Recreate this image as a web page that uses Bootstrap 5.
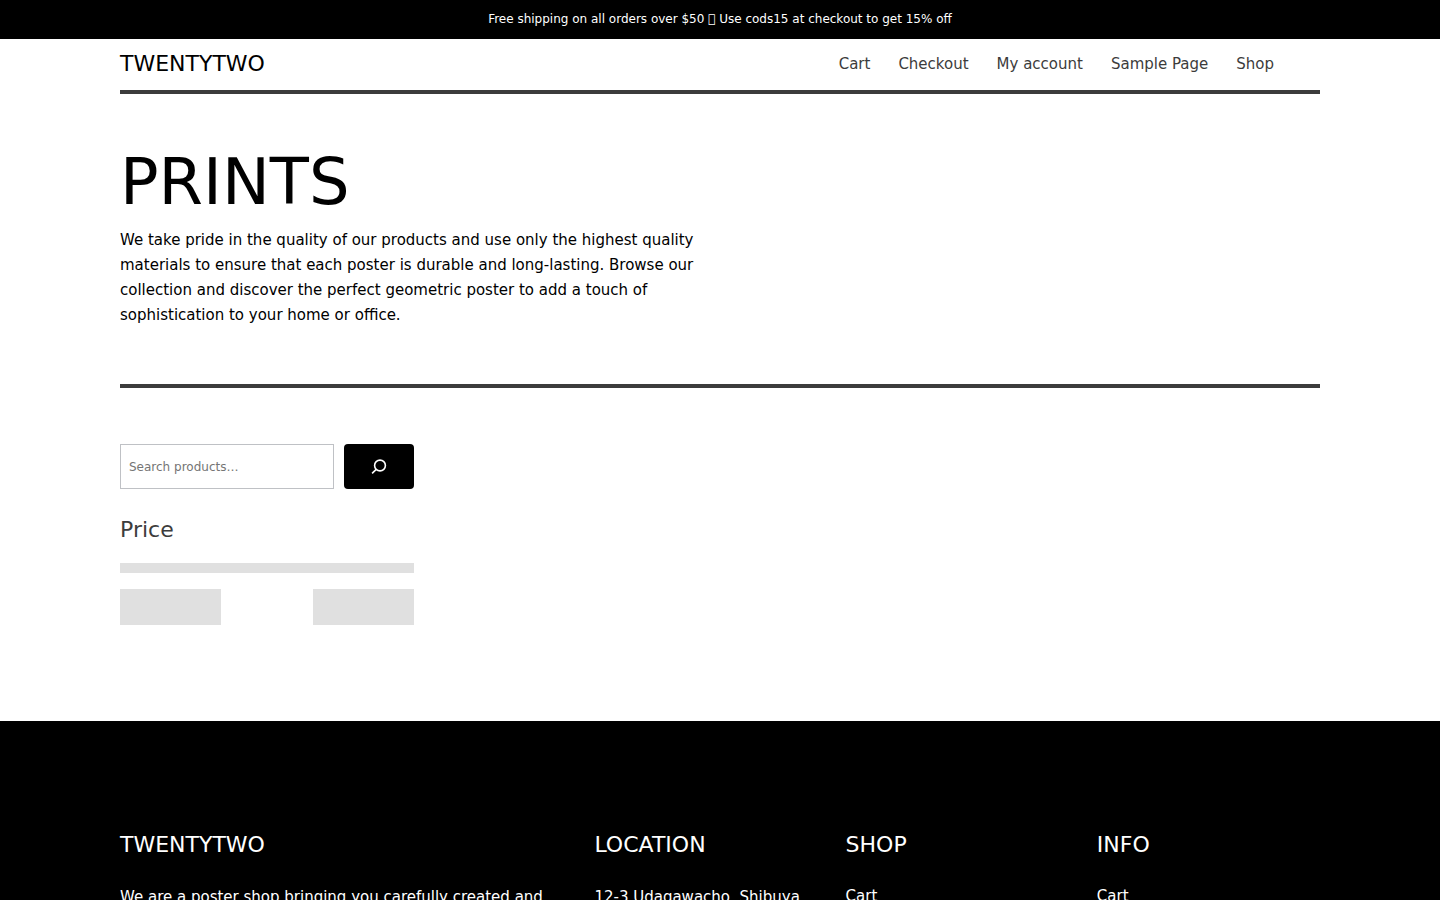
<!DOCTYPE html>
<html lang="en">
<head>
<meta charset="utf-8">
<meta name="viewport" content="width=device-width, initial-scale=1">
<title>Prints – TWENTYTWO</title>
<link href="https://cdn.jsdelivr.net/npm/bootstrap@5.3.0/dist/css/bootstrap.min.css" rel="stylesheet">
<style>
  body { font-family: "DejaVu Sans", sans-serif; font-size: 15px; line-height: 25px; color: #000; background: #fff; }
  a { color: inherit; text-decoration: none; }
  a:hover { text-decoration: underline; }
  .site-width { max-width: 1224px; padding-inline: 12px; }
  .promo { font-size: 12px; line-height: 21px; padding: 9px 12px; }
  .site-title, .foot-title, .filter-title { font-size: 22px; line-height: 28px; font-weight: 400; margin: 0; }
  .site-header { border-bottom: 4px solid #3c3c3c; color: #3c3c3c; padding: 11px 0 12px; }
  .site-nav { gap: 4px 28px; padding-right: 46px; }
  .intro { border-bottom: 4px solid #3c3c3c; padding: 50px 0 56px; }
  .intro h1 { font-size: 64px; line-height: 77px; font-weight: 400; margin: 0 0 7px; }
  .intro p { max-width: 600px; margin: 0; }
  .shop-body { padding: 56px 0 96px; }
  .shop-grid { display: grid; grid-template-columns: 1fr 3fr; gap: 24px; }
  .search-row { gap: 10px; height: 45px; }
  .search-row .form-control { font-size: 12px; padding: 0 8px; border: 1px solid #bfc1c5; border-radius: 0; }
  .search-row .form-control::placeholder { color: #757575; }
  .search-row .btn { width: 70px; background: #000; color: #fff; border-radius: 4px; padding: 0; }
  .filter-title { color: #3c3c3c; margin: 27px 0 19px; }
  .ghost { background: #e0e0e0; }
  .ghost-bar { height: 10px; margin-bottom: 16px; }
  .ghost-box { width: 101px; height: 36px; }
  .site-footer { padding: 110px 0 64px; }
  .foot-grid { display: grid; grid-template-columns: 2fr 1fr 1fr 1fr; gap: 28px; }
  .foot-title { margin-bottom: 26px; }
  .foot-links .foot-title { margin-bottom: 25px; }
  @media (max-width: 767px) {
    .shop-grid, .foot-grid { grid-template-columns: 1fr; }
    .site-nav { padding-right: 0; }
  }
</style>
</head>
<body>
<div class="promo bg-black text-white text-center">Free shipping on all orders over $50 &#xE0F0; Use cods15 at checkout to get 15% off</div>

<div class="container-fluid site-width">
  <header class="site-header d-flex flex-wrap justify-content-between align-items-center">
    <a class="site-title text-black" href="#">TWENTYTWO</a>
    <nav class="site-nav d-flex flex-wrap" aria-label="Main">
      <a href="#">Cart</a>
      <a href="#">Checkout</a>
      <a href="#">My account</a>
      <a href="#">Sample Page</a>
      <a href="#">Shop</a>
    </nav>
  </header>

  <main>
    <section class="intro">
      <h1>PRINTS</h1>
      <p>We take pride in the quality of our products and use only the highest quality materials to ensure that each poster is durable and long-lasting. Browse our collection and discover the perfect geometric poster to add a touch of sophistication to your home or office.</p>
    </section>

    <section class="shop-body">
      <div class="shop-grid">
        <aside>
          <form class="search-row d-flex" role="search">
            <label class="visually-hidden" for="product-search">Search</label>
            <input class="form-control" id="product-search" type="search" placeholder="Search products…">
            <button class="btn flex-shrink-0 d-flex align-items-center justify-content-center" type="submit" aria-label="Search">
              <svg width="24" height="24" viewBox="0 0 24 24" fill="none" stroke="currentColor" stroke-width="1.6" aria-hidden="true"><circle cx="13" cy="10.500" r="5.400"/><path d="M9.200 14.400 5.100 18.300"/></svg>
            </button>
          </form>
          <h3 class="filter-title">Price</h3>
          <div class="ghost ghost-bar"></div>
          <div class="d-flex justify-content-between">
            <div class="ghost ghost-box"></div>
            <div class="ghost ghost-box"></div>
          </div>
        </aside>
      </div>
    </section>
  </main>
</div>

<footer class="site-footer bg-black text-white">
  <div class="container-fluid site-width">
    <div class="foot-grid">
      <div>
        <h2 class="foot-title">TWENTYTWO</h2>
        <p>We are a poster shop bringing you carefully created and</p>
      </div>
      <div>
        <h2 class="foot-title">LOCATION</h2>
        <p>12-3 Udagawacho, Shibuya</p>
      </div>
      <div class="foot-links">
        <h2 class="foot-title">SHOP</h2>
        <a href="#">Cart</a>
      </div>
      <div class="foot-links">
        <h2 class="foot-title">INFO</h2>
        <a href="#">Cart</a>
      </div>
    </div>
  </div>
</footer>
<script src="https://cdn.jsdelivr.net/npm/bootstrap@5.3.0/dist/js/bootstrap.bundle.min.js"></script>
</body>
</html>
